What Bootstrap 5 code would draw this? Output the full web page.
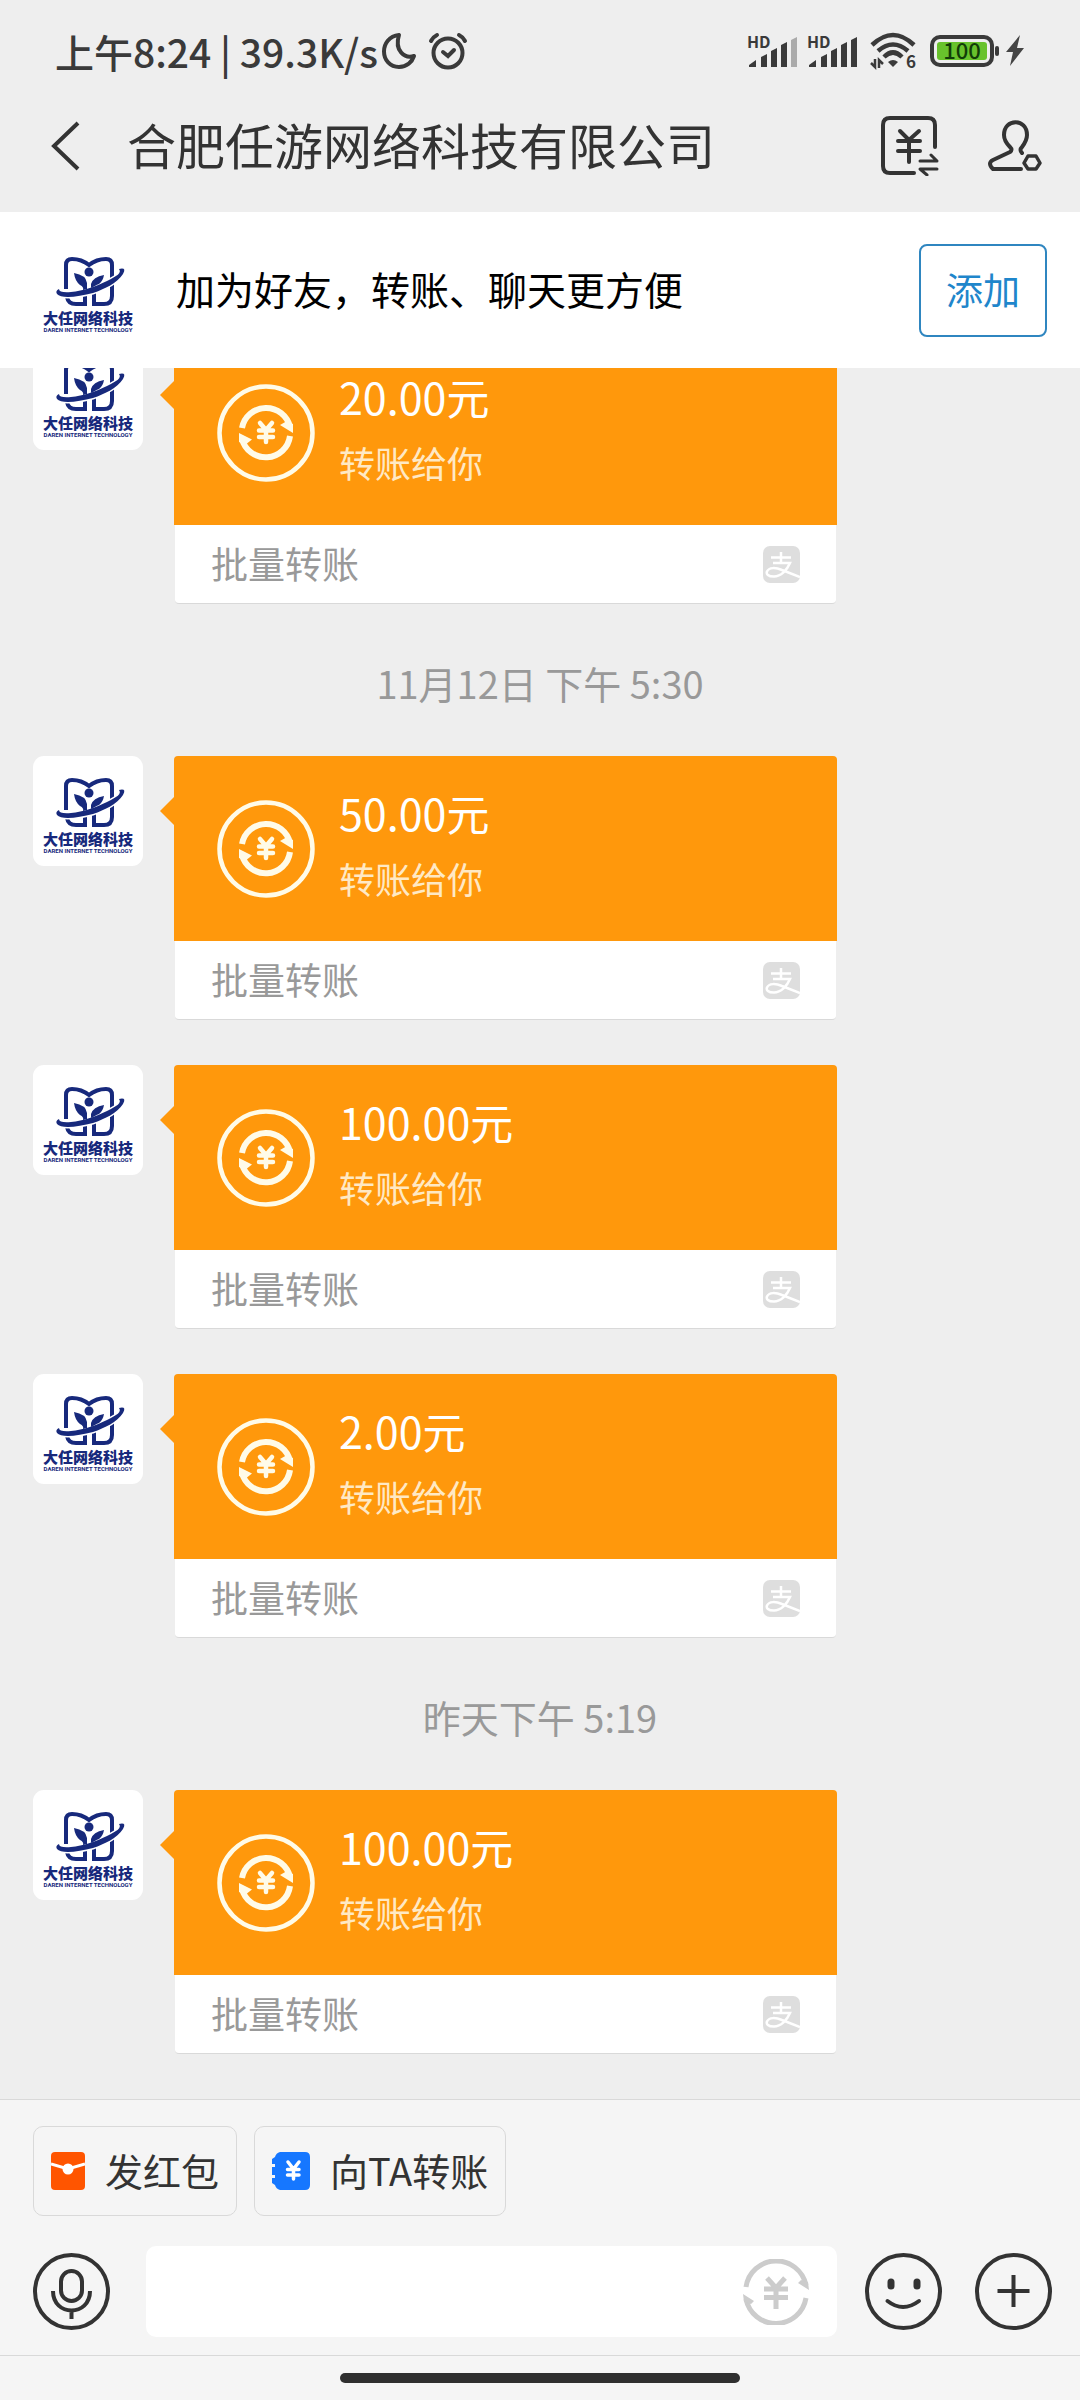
<!DOCTYPE html>
<html lang="zh-CN">
<head>
<meta charset="utf-8">
<meta name="viewport" content="width=device-width, initial-scale=1">
<title>合肥任游网络科技有限公司</title>
<link href="https://cdn.jsdelivr.net/npm/bootstrap@5.3.0/dist/css/bootstrap.min.css" rel="stylesheet">
<style>
  body { font-family: "Noto Sans CJK SC", "Noto Sans", sans-serif; background: #eeeeee; color: #333; }
  svg { display: block; flex: none; }
  .icon-btn { border: 0; background: none; padding: 0; color: #333; flex: none; }
  .icon-gap { margin-left: 48px; }
  .icon-gap-sm { margin-left: 33px; }

  .status-bar { height: 80px; padding: 22px 55px 0; font-size: 39px; line-height: 56px; color: #3a3a3a; }
  .status-bar .clock { font-weight: 500; }
  .status-bar .alarm { margin-left: 12px; }
  .status-bar svg { overflow: visible; }
  .status-bar svg text { font-family: "Noto Sans CJK SC", sans-serif; }
  .title-bar { height: 132px; padding: 0 38px 0 51px; }
  .title-bar h1 { font-size: 49px; line-height: 60px; font-weight: 400; margin: 0 0 0 46px; padding-bottom: 4px; }

  .friend-bar { height: 156px; background: #fff; padding: 0 33px; color: #000; font-size: 39px; line-height: 56px; }
  .friend-bar .tip { margin-left: 33px; padding-bottom: 4px; }
  .add-btn { width: 128px; height: 93px; border: 2px solid #2f86c0; border-radius: 8px; color: #1f86cb; background: #fff; font-size: 37px; line-height: 56px; padding: 0 0 2px; }

  .chat { min-height: 0; overflow-y: auto; scrollbar-width: none; flex-direction: column-reverse; }
  .chat::-webkit-scrollbar { display: none; }
  .thread { padding: 0 33px 45px; gap: 45px; }
  .stamp { font-size: 38px; line-height: 56px; padding-top: 6px; color: #999; text-align: center; }

  .avatar-box { width: 110px; height: 110px; flex: none; border-radius: 11px; background: #fff; color: #17297c; text-align: center; white-space: nowrap; }
  .avatar-box b { display: block; font-size: 15px; line-height: 17px; font-weight: 900; }
  .avatar-box small { display: block; font: 700 6px/8px Roboto, sans-serif; }

  .transfer { position: relative; width: 663px; margin-left: 31px; }
  .transfer::before { content: ""; position: absolute; left: -14px; top: 40px; border: solid transparent; border-width: 15px 15px 15px 0; border-right-color: #ff980c; }
  .transfer-main { height: 185px; padding-left: 43px; gap: 24px; background: #ff980c; border-radius: 4px 4px 0 0; color: #fff; }
  .transfer-main .words { padding-bottom: 10px; }
  .transfer-main .amount { font-size: 43px; line-height: 50px; }
  .transfer-main .note { font-size: 36px; line-height: 44px; margin-top: 19px; color: #ffe9c4; }
  .transfer-foot { height: 79px; margin: 0 1px; padding: 0 36px; background: #fff; border-bottom: 1px solid #d9d9d9; border-radius: 0 0 4px 4px; color: #999; font-size: 37px; line-height: 50px; }
  .transfer-foot span { padding-bottom: 2px; }

  .composer { background: #f5f5f5; border-top: 1px solid #d9d9d9; }
  .quick-row { padding: 26px 33px 0; gap: 17px; }
  .quick { height: 90px; border: 1px solid #d9d9d9; border-radius: 10px; background: #f5f5f5; color: #333; font-size: 38px; line-height: 56px; padding: 0 17px; gap: 20px; }
  .quick span { padding-bottom: 3px; }
  .input-row { padding: 30px 28px 18px 33px; }
  .msg-field { height: 91px; margin: 0 28px 0 36px; background: #fff; border-radius: 10px; padding-right: 28px; }
  .msg-field input { border: 0; background: transparent; font-size: 39px; min-width: 0; outline: 0; padding: 0 24px; }
  .home-area { border-top: 1px solid #d9d9d9; height: 45px; padding-top: 17px; }
  .home-bar { width: 37%; height: 10px; border-radius: 5px; background: #2f2f2f; }
</style>
<script src="https://cdn.jsdelivr.net/npm/bootstrap@5.3.0/dist/js/bootstrap.bundle.min.js"></script>
</head>
<body>
<svg width="0" height="0" class="position-absolute" aria-hidden="true">
  <symbol id="mark-daren" viewBox="0 0 110 74">
    <g fill="none" stroke="#17297c" stroke-width="4">
      <path d="M33 54V30Q33 24 39 24C46 24 51 26 56 30C61 26 67 24 73 24Q79 24 79 30V61Q79 69 71 69H61V56"/>
      <path d="M34 62Q35 69 43 69H52V58"/>
    </g>
    <path d="M86 34Q94 32 90 39C84 48 72 54 60 58C45 62 28 64 24 59Q22 56 26 54Q26 58 38 57C50 56 64 51 74 46C84 41 89 38 86 34Z" fill="#17297c" stroke="#fff" stroke-width="3" paint-order="stroke"/>
    <g fill="#17297c">
      <circle cx="56" cy="37" r="4.500"/>
      <path d="M41 38Q53 40 54 48V54L50 55Q51 52 47 50Q42 46 41 38ZM71 40Q60 42 58 49V53L62 51Q63 50 66 49Q70 46 71 40Z"/>
    </g>
  </symbol>
  <symbol id="ico-cycle" viewBox="0 0 98 98">
    <circle cx="49" cy="49" r="46.500" fill="none" stroke="#fffbe8" stroke-width="4.500"/>
    <g fill="none" stroke="#fffbe8" stroke-width="6">
      <path d="M25 44A24.500 24.500 0 0 1 73 43"/><path d="M73 52A24.500 24.500 0 0 1 25 55"/>
      <path d="M43 39L49 46L55 39M49 46V58M42 46.500H56M42 53H56" stroke-width="4.500" stroke-linecap="round"/>
    </g>
    <path d="M63 41L76 49V40L70 37ZM35 55.500L22 49V58L28 61Z" fill="#fffbe8"/>
  </symbol>
  <symbol id="ico-ali" viewBox="0 0 37 37">
    <rect width="37" height="37" rx="7" fill="#dedede"/>
    <path d="M8 11.500H28M18 6V17M10 17H27C24 24 18 30.500 11 30.500C5 30.500 3 28 4 25.500C6 21 13 21.500 19 24L37 31" fill="none" stroke="#fff" stroke-width="2.500"/>
  </symbol>
</svg>

<div class="d-flex flex-column vh-100">
  <header class="flex-shrink-0">
    <div class="status-bar d-flex align-items-center">
      <span class="clock">上午8:24 | 39.3K/s</span>
      <svg class="ms-1" width="34" height="38" viewBox="0 0 34 38"><path d="M17 3C7 4 2 12 2 19.500C2 28 8 35 17 35C25 35 30 30 32 24C23 27 12 19 17 3Z" fill="none" stroke="#3a3a3a" stroke-width="4" stroke-linejoin="round"/></svg>
      <svg class="alarm" width="40" height="40" viewBox="0 0 40 40"><g fill="none" stroke="#3a3a3a" stroke-width="4" stroke-linecap="round"><circle cx="20" cy="22" r="14.500"/><path d="M3 10Q5 6 9 4M37 10Q35 6 31 4M15 21L20 25L26 19"/></g></svg>
      <div class="d-flex align-items-center ms-auto">
        <svg width="112" height="42" viewBox="0 -4 112 42">
          <g fill="#3a3a3a">
            <path d="M2 33V31L9 26V33ZM14 33V23L20 20V33ZM24 33V17L30 14V33ZM34 33V11L40 8V33Z"/>
            <path d="M44 33V6L50 3V33Z" fill="#aaa"/>
            <path d="M62 33V31L69 26V33ZM74 33V23L80 20V33ZM84 33V17L90 14V33ZM94 33V11L100 8V33ZM104 33V6L110 3V33Z"/>
            <text x="0" y="14" font-size="16" font-weight="700">HD</text><text x="60" y="14" font-size="16" font-weight="700">HD</text>
          </g>
        </svg>
        <svg class="ms-2" width="52" height="44" viewBox="-3 -3 52 44">
          <g fill="none" stroke="#3a3a3a" stroke-width="4.500"><path d="M2 13Q23 -7 44 13"/><path d="M8 19Q23 6 38 19"/><path d="M14 25Q23 16 32 25"/></g>
          <path d="M18 30Q23 26 28 30L23 35Z" fill="#3a3a3a"/>
          <path d="M5 27V35L1 31M9 36V28L13 32" fill="none" stroke="#3a3a3a" stroke-width="2.500"/>
          <text x="36" y="36" font-size="17" font-weight="700" fill="#3a3a3a">6</text>
        </svg>
        <svg class="ms-2" width="98" height="34" viewBox="-3 0 98 34">
          <rect x="2" y="3" width="60" height="28" rx="8" fill="none" stroke="#3a3a3a" stroke-width="4"/>
          <rect x="7" y="8" width="50" height="18" rx="3" fill="#68c22c"/>
          <rect x="65" y="12" width="4" height="10" rx="2" fill="#3a3a3a"/>
          <text x="32" y="25" text-anchor="middle" font-size="22" font-weight="500" fill="#123c08">100</text>
          <path d="M90 1L76 18H83L80 32L94 14H87Z" fill="#444"/>
        </svg>
      </div>
    </div>
    <nav class="title-bar d-flex align-items-center">
      <button class="icon-btn" aria-label="返回"><svg width="30" height="50" viewBox="0 0 30 50"><path d="M27 2L3 25L27 48" fill="none" stroke="#333" stroke-width="4"/></svg></button>
      <h1>合肥任游网络科技有限公司</h1>
      <button class="icon-btn ms-auto" aria-label="转账记录"><svg width="58" height="60" viewBox="0 0 58 60"><g fill="none" stroke="#333" stroke-width="4" stroke-linecap="round" stroke-linejoin="round"><path d="M33 57H9Q2 57 2 50V9Q2 2 9 2H47Q54 2 54 9V31"/><path d="M19 15L28 24L38 15M28 24V46M17 25H39M17 35H39"/><path d="M39 45H56L50 39M56 53H39L46 59" stroke-width="3"/></g></svg></button>
      <button class="icon-btn icon-gap" aria-label="好友资料"><svg width="55" height="52" viewBox="0 0 55 52"><g fill="none" stroke="#333" stroke-width="4" stroke-linejoin="round" stroke-linecap="round"><path d="M34 49H6Q0 43 6 40L23 32Q26 30 23 27C19 23 17 20 17 15C17 -2 40 -2 40 15C40 20 38 23 35 27Q32 30 35 33"/><path d="M41 36H49L53 43L49 49H41L37 43Z" stroke-width="3.500"/></g></svg></button>
    </nav>
  </header>

  <section class="friend-bar d-flex align-items-center flex-shrink-0">
    <div class="avatar-box"><svg width="110" height="74"><use href="#mark-daren"/></svg><b>大任网络科技</b><small>DAREN INTERNET TECHNOLOGY</small></div>
    <span class="tip flex-fill">加为好友，转账、聊天更方便</span>
    <button class="add-btn">添加</button>
  </section>

  <main class="chat d-flex flex-fill">
    <div class="thread d-flex flex-column">
      <article class="d-flex">
        <div class="avatar-box"><svg width="110" height="74"><use href="#mark-daren"/></svg><b>大任网络科技</b><small>DAREN INTERNET TECHNOLOGY</small></div>
        <div class="transfer">
          <div class="transfer-main d-flex align-items-center"><svg width="98" height="98"><use href="#ico-cycle"/></svg><div class="words"><div class="amount">20.00元</div><div class="note">转账给你</div></div></div>
          <div class="transfer-foot d-flex align-items-center justify-content-between"><span>批量转账</span><svg width="37" height="37"><use href="#ico-ali"/></svg></div>
        </div>
      </article>
      <time class="stamp">11月12日 下午 5:30</time>
      <article class="d-flex">
        <div class="avatar-box"><svg width="110" height="74"><use href="#mark-daren"/></svg><b>大任网络科技</b><small>DAREN INTERNET TECHNOLOGY</small></div>
        <div class="transfer">
          <div class="transfer-main d-flex align-items-center"><svg width="98" height="98"><use href="#ico-cycle"/></svg><div class="words"><div class="amount">50.00元</div><div class="note">转账给你</div></div></div>
          <div class="transfer-foot d-flex align-items-center justify-content-between"><span>批量转账</span><svg width="37" height="37"><use href="#ico-ali"/></svg></div>
        </div>
      </article>
      <article class="d-flex">
        <div class="avatar-box"><svg width="110" height="74"><use href="#mark-daren"/></svg><b>大任网络科技</b><small>DAREN INTERNET TECHNOLOGY</small></div>
        <div class="transfer">
          <div class="transfer-main d-flex align-items-center"><svg width="98" height="98"><use href="#ico-cycle"/></svg><div class="words"><div class="amount">100.00元</div><div class="note">转账给你</div></div></div>
          <div class="transfer-foot d-flex align-items-center justify-content-between"><span>批量转账</span><svg width="37" height="37"><use href="#ico-ali"/></svg></div>
        </div>
      </article>
      <article class="d-flex">
        <div class="avatar-box"><svg width="110" height="74"><use href="#mark-daren"/></svg><b>大任网络科技</b><small>DAREN INTERNET TECHNOLOGY</small></div>
        <div class="transfer">
          <div class="transfer-main d-flex align-items-center"><svg width="98" height="98"><use href="#ico-cycle"/></svg><div class="words"><div class="amount">2.00元</div><div class="note">转账给你</div></div></div>
          <div class="transfer-foot d-flex align-items-center justify-content-between"><span>批量转账</span><svg width="37" height="37"><use href="#ico-ali"/></svg></div>
        </div>
      </article>
      <time class="stamp">昨天下午 5:19</time>
      <article class="d-flex">
        <div class="avatar-box"><svg width="110" height="74"><use href="#mark-daren"/></svg><b>大任网络科技</b><small>DAREN INTERNET TECHNOLOGY</small></div>
        <div class="transfer">
          <div class="transfer-main d-flex align-items-center"><svg width="98" height="98"><use href="#ico-cycle"/></svg><div class="words"><div class="amount">100.00元</div><div class="note">转账给你</div></div></div>
          <div class="transfer-foot d-flex align-items-center justify-content-between"><span>批量转账</span><svg width="37" height="37"><use href="#ico-ali"/></svg></div>
        </div>
      </article>
    </div>
  </main>

  <footer class="composer flex-shrink-0">
    <div class="quick-row d-flex">
      <button class="quick d-flex align-items-center"><svg width="34" height="38" viewBox="0 0 34 38"><rect width="34" height="38" rx="4" fill="#ff5500"/><path d="M0 12L17 17L34 12" fill="none" stroke="#fff" stroke-width="3"/><circle cx="17" cy="17" r="5.500" fill="#fff"/></svg><span>发红包</span></button>
      <button class="quick d-flex align-items-center"><svg width="38" height="38" viewBox="0 0 38 38"><path d="M8 0H33Q38 0 38 5V33Q38 38 33 38H8Q4 37 3 33L0 31V26H3V23H0V15H3V12H0V7L3 5Q4 1 8 0Z" fill="#1677ff"/><path d="M16 10L21.500 17L27 10M21.500 17V27M15.500 17.500H27M15.500 23H27" fill="none" stroke="#fff" stroke-width="3.500" stroke-linecap="round"/></svg><span>向TA转账</span></button>
    </div>
    <div class="input-row d-flex align-items-center">
      <button class="icon-btn" aria-label="语音"><svg width="77" height="77" viewBox="0 0 77 77"><g fill="none" stroke="#333" stroke-width="4"><circle cx="38.500" cy="38.500" r="36.500"/><rect x="28" y="18" width="21" height="30" rx="10.500"/><path d="M20 38C20 64 57 64 57 38M38.500 57V66"/></g></svg></button>
      <div class="msg-field d-flex align-items-center flex-fill">
        <input type="text" class="flex-fill" aria-label="消息">
        <button class="icon-btn" aria-label="转账"><svg width="66" height="66" viewBox="0 0 66 66"><g fill="none" stroke="#ccc" stroke-width="5"><path d="M3 28A30.500 30.500 0 0 1 63 26M63 39A30.500 30.500 0 0 1 3 40"/><path d="M24 19L33 29L42 19M33 29V50M21 30H45M21 38.500H45"/></g><path d="M55 24L58 21L65 23L66 31ZM11 42L8 45L1 43L0 35Z" fill="#ccc"/></svg></button>
      </div>
      <button class="icon-btn" aria-label="表情"><svg width="77" height="77" viewBox="0 0 77 77"><g fill="none" stroke="#333" stroke-width="4" stroke-linecap="round"><circle cx="38.500" cy="38.500" r="36.500"/><path d="M22.500 48Q38 60 54 48"/><path d="M26 29V33M52 29V33" stroke-width="7"/></g></svg></button>
      <button class="icon-btn icon-gap-sm" aria-label="更多"><svg width="77" height="77" viewBox="0 0 77 77"><g fill="none" stroke="#333" stroke-width="4"><circle cx="38.500" cy="38.500" r="36.500"/><path d="M38.500 22V54M22.500 38H54.500"/></g></svg></button>
    </div>
    <div class="home-area"><div class="home-bar mx-auto"></div></div>
  </footer>
</div>
</body>
</html>
